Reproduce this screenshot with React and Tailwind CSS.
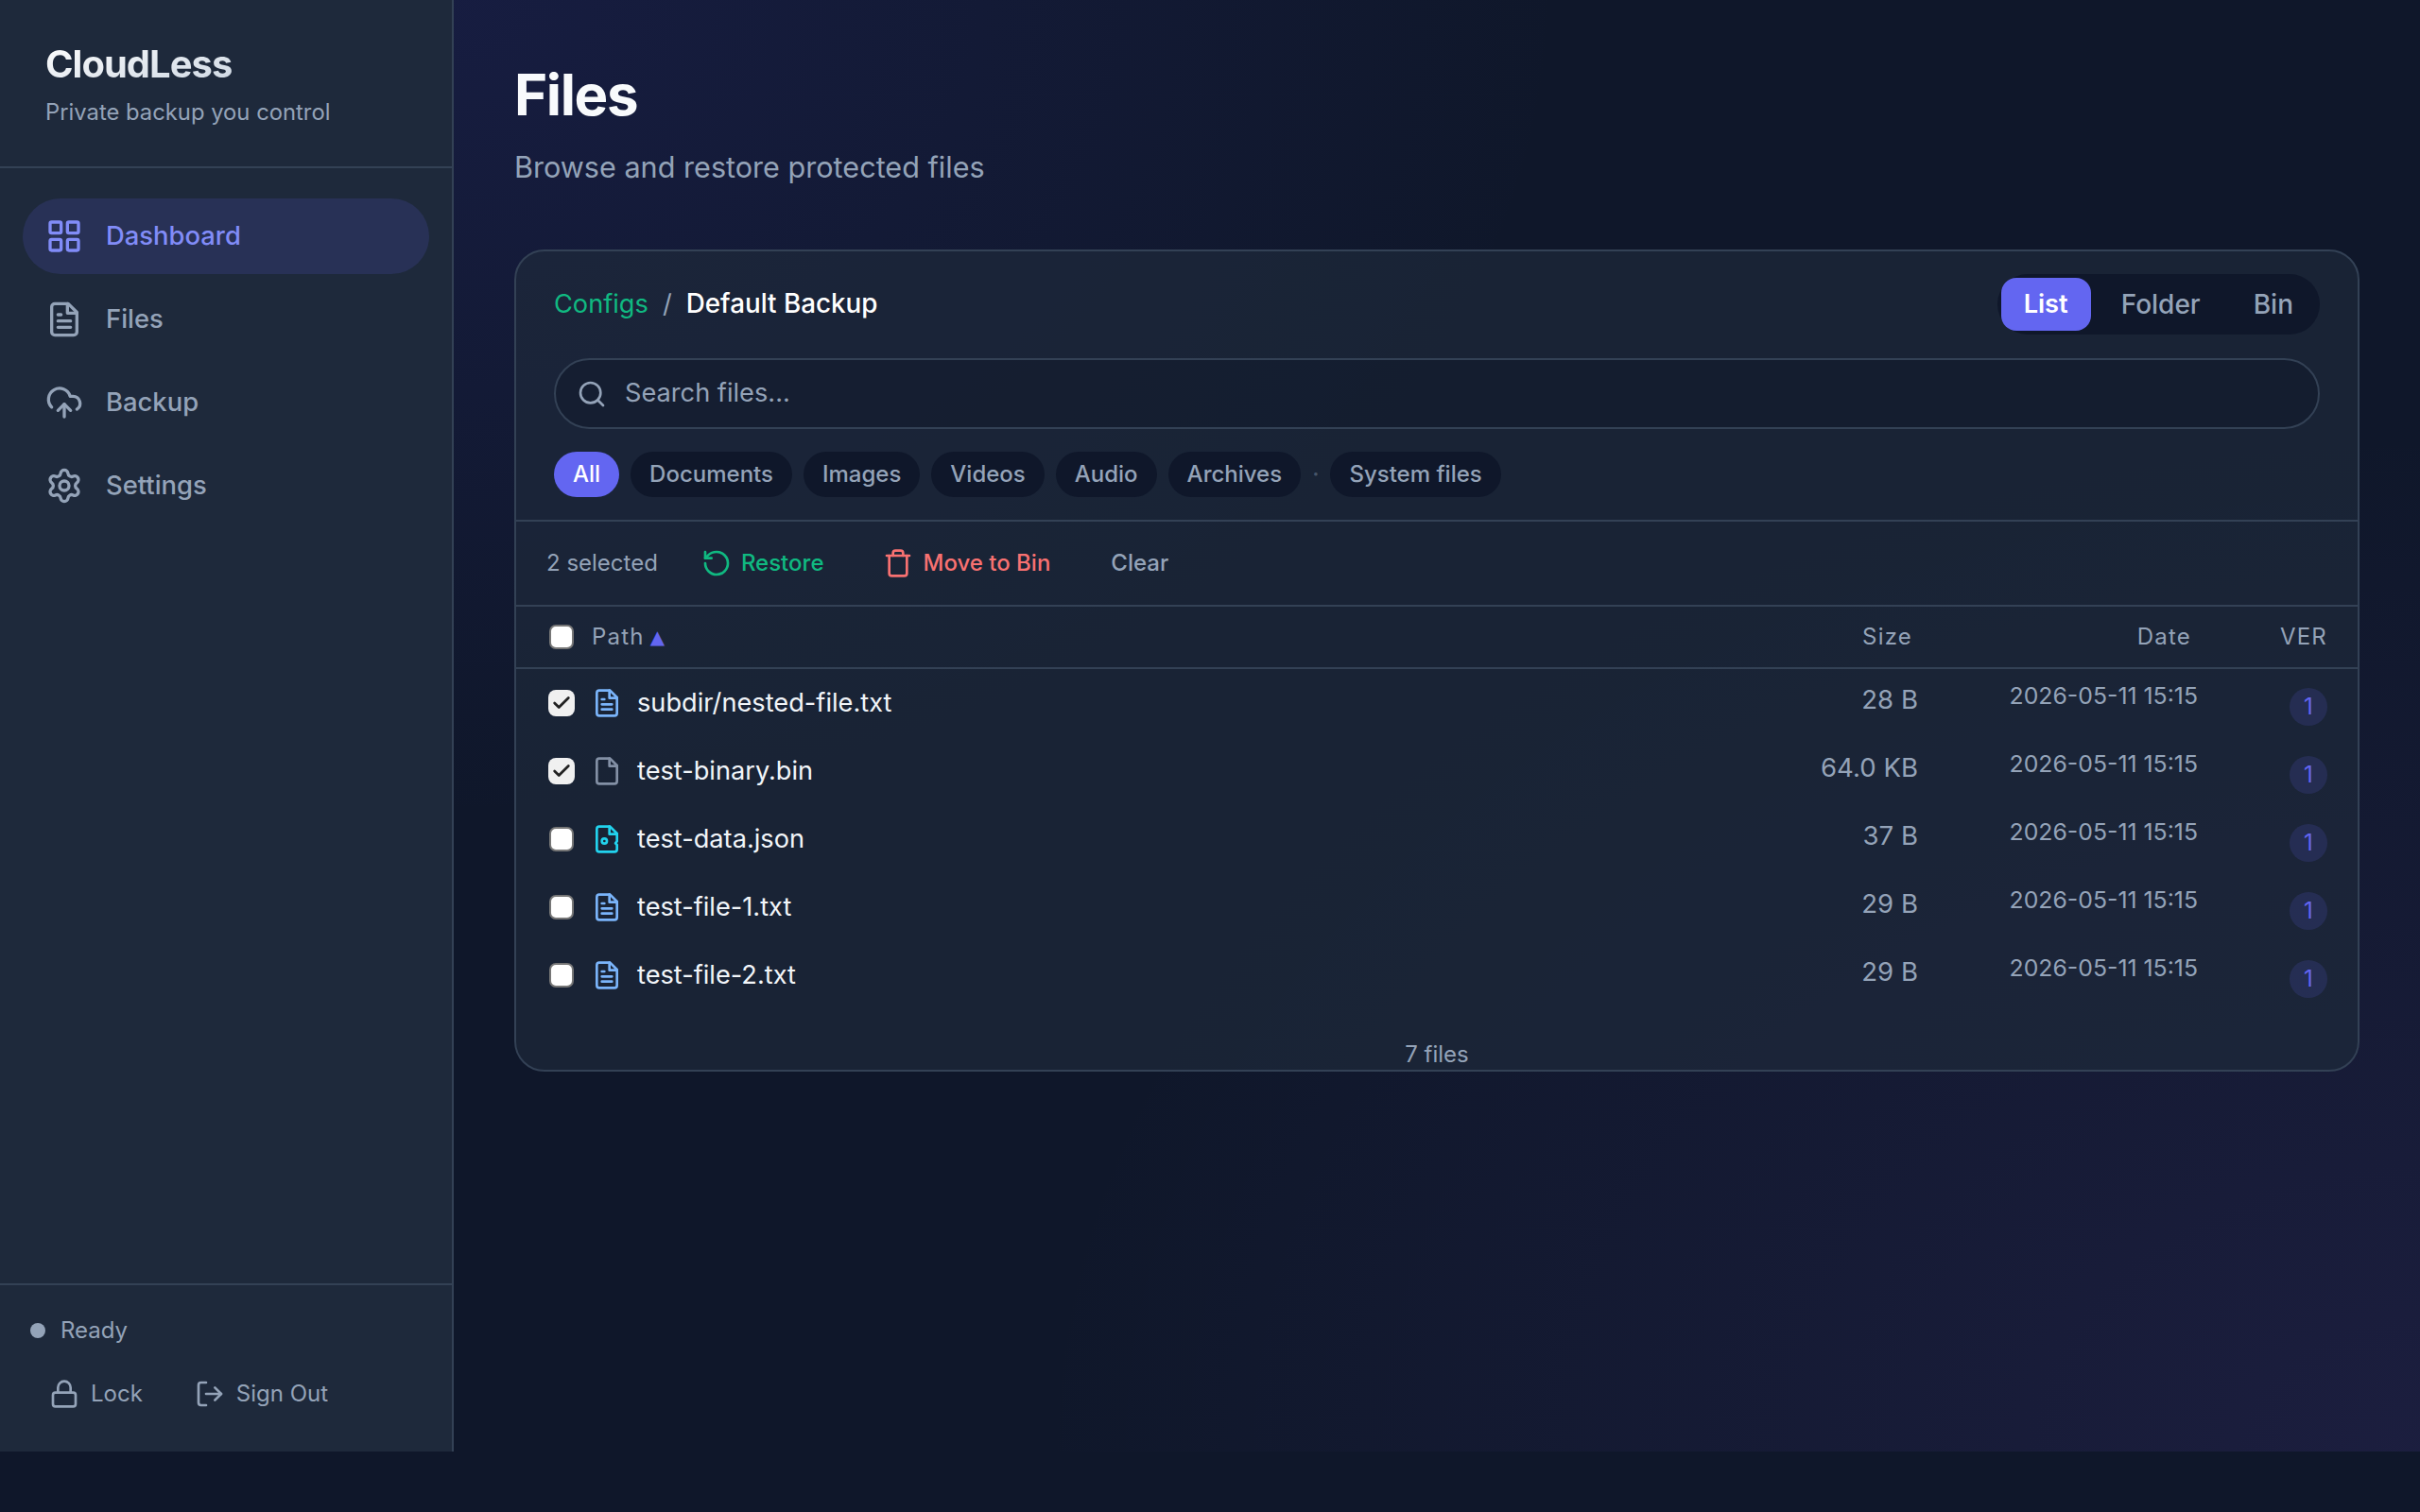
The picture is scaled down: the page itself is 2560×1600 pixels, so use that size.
import { LayoutGrid, CloudUpload, Settings, Lock, LogOut, Search, RotateCcw, Trash, Check } from "lucide-react";

function DocIcon({ size = 32, kind = "text", className }) {
  return (
    <svg width={size} height={size} viewBox="0 0 24 24" fill="none" stroke="currentColor" strokeWidth="2" strokeLinecap="round" strokeLinejoin="round" className={className}>
      {kind === "json" ? (
        <>
          <path d="M14.5 2H6a2 2 0 0 0-2 2v16a2 2 0 0 0 2 2h12a2 2 0 0 0 2-2v-3.5l-1.2-1.2 1.2-1.6V7.5L14.5 2z" />
          <circle cx="10" cy="13.5" r="2" />
        </>
      ) : (
        <path d="M14.5 2H6a2 2 0 0 0-2 2v16a2 2 0 0 0 2 2h12a2 2 0 0 0 2-2V7.5L14.5 2z" />
      )}
      <path d="M14 2v6h6" />
      {kind === "text" && <path d="M16 13H8M16 17H8M10 9H8" />}
    </svg>
  );
}

const navItems = [
  { label: "Dashboard", icon: LayoutGrid, active: true },
  { label: "Files", icon: DocIcon },
  { label: "Backup", icon: CloudUpload },
  { label: "Settings", icon: Settings },
];

const chips = ["Documents", "Images", "Videos", "Audio", "Archives"];

const files = [
  { name: "subdir/nested-file.txt", size: "28 B", kind: "text", color: "text-[#7ab4fa]", checked: true },
  { name: "test-binary.bin", size: "64.0 KB", kind: "plain", color: "text-[#8390a5]", checked: true },
  { name: "test-data.json", size: "37 B", kind: "json", color: "text-[#22d3ee]" },
  { name: "test-file-1.txt", size: "29 B", kind: "text", color: "text-[#7ab4fa]" },
  { name: "test-file-2.txt", size: "29 B", kind: "text", color: "text-[#7ab4fa]" },
];

function Box({ checked }) {
  if (checked) {
    return (
      <span className="ml-[2px] flex h-[28px] w-[28px] items-center justify-center rounded-[8px] bg-[#f0f0f0] text-[#222222]">
        <Check size={22} strokeWidth={3} />
      </span>
    );
  }
  return <span className="ml-[3px] block h-[26px] w-[26px] rounded-[7px] border-2 border-[#767676] bg-white" />;
}

function Sidebar() {
  return (
    <aside className="flex w-[480px] shrink-0 flex-col border-r-2 border-[#334155] bg-[#1e293b]">
      <div className="h-[178px] border-b-2 border-[#334155] px-[48px] pt-[41px]">
        <h1 className="w-fit bg-linear-to-br from-white to-[#cbd5e1] bg-clip-text text-[40px] leading-[54px] font-bold tracking-[-1px] text-transparent">CloudLess</h1>
        <p className="mt-[6px] text-[23.8px] leading-[36px] text-[#94a3b8]">Private backup you control</p>
      </div>
      <nav className="flex flex-col gap-2 px-6 pt-8">
        {navItems.map(({ label, icon: Icon, active }) => (
          <a key={label} className={`flex h-[80px] items-center gap-6 rounded-full px-6 text-[27.4px] font-medium ${active ? "bg-[#6366f1]/15 text-[#818cf8]" : "text-[#94a3b8]"}`}>
            <Icon size={40} />
            {label}
          </a>
        ))}
      </nav>
      <div className="mt-auto h-[178px] border-t-2 border-[#334155] px-8 pt-[30px]">
        <div className="flex h-[36px] items-center gap-4 text-[24px] text-[#94a3b8]">
          <span className="h-4 w-4 rounded-full bg-[#94a3b8]" />
          Ready
        </div>
        <div className="mt-[21px] flex gap-[55px] pl-[20px] text-[24px] text-[#94a3b8]">
          <button className="flex h-[56px] items-center gap-3"><Lock size={32} />Lock</button>
          <button className="flex h-[56px] items-center gap-3"><LogOut size={32} />Sign Out</button>
        </div>
      </div>
    </aside>
  );
}

function FileRow({ file }) {
  return (
    <div className="grid h-[72px] grid-cols-[48px_1fr_200px_296px_137px] px-8">
      <div className="flex items-center"><Box checked={file.checked} /></div>
      <div className="flex items-center gap-4 text-[27.2px] text-[#f1f5f9]">
        <DocIcon kind={file.kind} className={file.color} />
        {file.name}
      </div>
      <div className="pt-[11px] text-right text-[27.6px] leading-[42px] text-[#94a3b8]">{file.size}</div>
      <div className="pt-[10px] text-right text-[24.8px] leading-[36px] text-[#94a3b8]">2026-05-11 15:15</div>
      <div className="flex justify-end pt-[20px]">
        <span className="flex h-[40px] w-[40px] items-center justify-center rounded-full bg-[#6366f1]/15 text-[24px] text-[#6366f1]">1</span>
      </div>
    </div>
  );
}

export default function App() {
  return (
    <div className="h-[1600px] bg-[#0f172a] font-['Inter',sans-serif]">
      <div className="flex h-[1536px]">
        <Sidebar />
        <main className="flex-1 bg-[radial-gradient(ellipse_at_top_left,rgba(79,70,229,0.12),transparent_40%),radial-gradient(ellipse_at_bottom_right,rgba(139,92,246,0.1),transparent_50%)] px-16 pt-[64px]">
          <h2 className="text-[60px] leading-[73px] font-bold tracking-[-1.4px] text-[#f8fafc]">Files</h2>
          <p className="mt-[20px] text-[30.6px] leading-[40px] text-[#94a3b8]">Browse and restore protected files</p>
          <section className="mt-[67px] h-[870px] rounded-[32px] border-2 border-[#334155] bg-[#1e293b]/70">
            <div className="h-[286px] border-b-2 border-[#334155] px-10 pt-[24px]">
              <div className="flex items-center justify-between">
                <div className="flex items-center gap-[15px] text-[27.2px]">
                  <span className="text-[#10b981]">Configs</span>
                  <span className="text-[#94a3b8]">/</span>
                  <span className="text-[27.8px] font-medium text-white">Default Backup</span>
                </div>
                <div className="flex items-center gap-2 rounded-full bg-[#0f172a] p-1 text-[28px] font-medium text-[#94a3b8]">
                  <span className="flex h-[56px] items-center rounded-[16px] bg-[#6366f1] px-[24px] text-[27.2px] font-semibold text-white">List</span>
                  <span className="flex h-[56px] items-center px-6">Folder</span>
                  <span className="flex h-[56px] items-center px-6">Bin</span>
                </div>
              </div>
              <div className="mt-[25px] flex h-[75px] items-center gap-[19px] rounded-full border-2 border-[#334155] bg-[#0f172a]/50 pl-[22px] text-[27.2px] text-[#94a3b8]">
                <Search size={32} />
                <span>Search files...</span>
              </div>
              <div className="mt-[24px] flex items-center gap-3 text-[24px] font-medium text-[#94a3b8]">
                <span className="flex h-[48px] items-center rounded-full bg-[#6366f1] px-5 text-white">All</span>
                {chips.map((c) => (
                  <span key={c} className="flex h-[48px] items-center rounded-full bg-[#0f172a] px-5">{c}</span>
                ))}
                <span className="text-[#475569]">·</span>
                <span className="flex h-[48px] items-center rounded-full bg-[#0f172a] px-5">System files</span>
              </div>
            </div>
            <div className="flex h-[90px] items-center border-b-2 border-[#334155] px-8 text-[24px]">
              <span className="text-[#94a3b8]">2 selected</span>
              <button className="ml-[46px] flex items-center gap-[10px] font-medium text-[#10b981]"><RotateCcw size={32} />Restore</button>
              <button className="ml-[63px] flex items-center gap-[10px] font-medium text-[#f87171]"><Trash size={32} />Move to Bin</button>
              <button className="ml-[64px] font-medium text-[#94a3b8]">Clear</button>
            </div>
            <div className="grid h-[66px] grid-cols-[48px_1fr_200px_296px_137px] items-center border-b-2 border-[#334155] px-8 text-[24px] tracking-[1.2px] text-[#94a3b8]">
              <Box />
              <div className="flex items-center gap-[6px]">Path <span className="font-['DejaVu_Sans',sans-serif] text-[20px] tracking-normal text-[#6366f1]">▲</span></div>
              <div className="pr-[6px] text-right">Size</div>
              <div className="pr-[7px] text-right">Date</div>
              <div className="text-right">VER</div>
            </div>
            {files.map((f) => <FileRow key={f.name} file={f} />)}
            <div className="pt-[30px] text-center text-[24px] leading-[36px] text-[#94a3b8]">7 files</div>
          </section>
        </main>
      </div>
    </div>
  );
}
